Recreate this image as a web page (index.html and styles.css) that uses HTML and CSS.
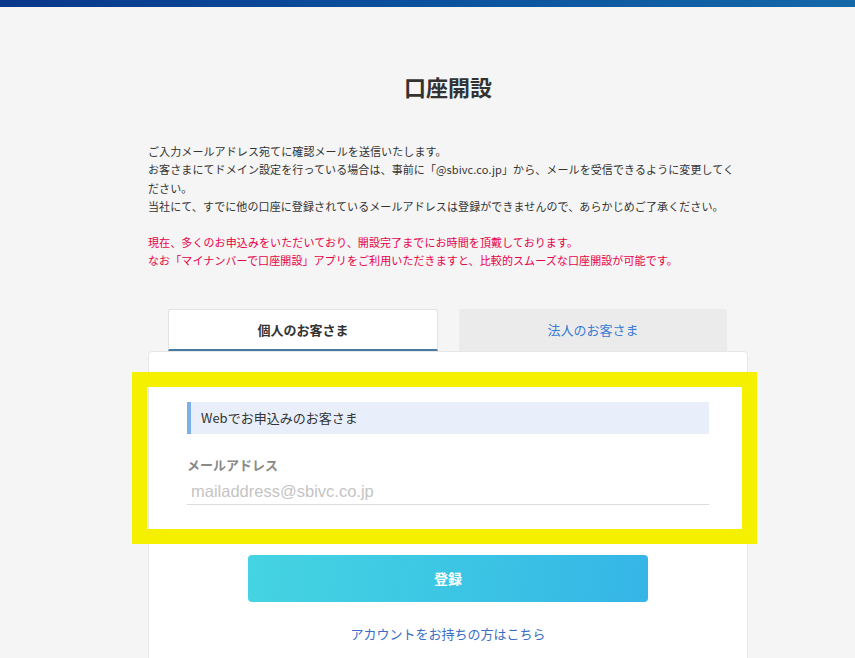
FILE: index.html
```html
<!DOCTYPE html>
<html>
	<head>
		<meta charset="UTF-8">
		<title>口座開設</title>
		<link rel="stylesheet" href="styles.css">
	</head>
	<body>
		<div class="topbar"></div>
		<div class="main">
			<h1 class="title">口座開設</h1>
			<div class="notice">
				<p>ご入力メールアドレス宛てに確認メールを送信いたします。<br>お客さまにてドメイン設定を行っている場合は、事前に「@sbivc.co.jp」から、メールを受信できるように変更してください。<br>当社にて、すでに他の口座に登録されているメールアドレスは登録ができませんので、あらかじめご了承ください。</p>
				<p class="red">現在、多くのお申込みをいただいており、開設完了までにお時間を頂戴しております。<br>なお「マイナンバーで口座開設」アプリをご利用いただきますと、比較的スムーズな口座開設が可能です。</p>
			</div>
			<div class="tabs">
				<div class="tab active">個人のお客さま</div>
				<div class="tab">法人のお客さま</div>
			</div>
			<div class="card">
				<div class="sec-title">Webでお申込みのお客さま</div>
				<label class="label">メールアドレス</label>
				<div class="input">mailaddress@sbivc.co.jp</div>
				<div class="btn">登録</div>
				<a class="link" href="#">アカウントをお持ちの方はこちら</a>
				<div class="mark"></div>
			</div>
		</div>
	</body>
</html>
```

FILE: styles.css
```css
html,body{
	margin: 0;
	padding: 0;
}
body{
	background: #f5f5f5;
	font-family: "Noto Sans CJK JP", "Liberation Sans", sans-serif;
	color: #333;
	height: 658px;
	overflow: hidden;
}
.topbar{
	height: 7px;
	background: linear-gradient(90deg, #0a378a 0%, #0a4f9c 45%, #1468a8 100%);
}
.main{
	width: 600px;
	margin-left: 148px;
}
.title{
	margin: 63px 0 0;
	font-size: 22px;
	line-height: 33px;
	font-weight: bold;
	text-align: center;
	color: #333;
}
.notice{
	width: 588px;
	margin-top: 39px;
	font-size: 11px;
	line-height: 18.3px;
	letter-spacing: 0.1px;
	color: #333;
}
.notice p{
	margin: 0 0 18px;
}
.notice .red{
	color: #e6004a;
	margin: 0;
}
.tabs{
	display: flex;
	gap: 21px;
	padding: 0 21px 0 20px;
	margin-top: 40px;
	height: 41px;
	align-items: flex-end;
}
.tab{
	flex: 1;
	height: 42px;
	box-sizing: border-box;
	display: flex;
	align-items: center;
	justify-content: center;
	font-size: 13px;
	color: #3a7bd5;
	background: #ebebeb;
	border-radius: 3px 3px 0 0;
}
.tab.active{
	height: 42px;
	background: #fff;
	color: #333;
	font-weight: bold;
	border: 1px solid #e2e2e2;
	border-bottom: 2px solid #4a7aa0;
}
.card{
	position: relative;
	background: #fff;
	border: 1px solid #e6e6e6;
	border-radius: 4px;
	padding: 50px 38px 40px;
	height: 400px;
}
.sec-title{
	height: 32px;
	line-height: 32px;
	background: #e8effb;
	border-left: 4px solid #7eb0e8;
	padding-left: 10px;
	font-size: 13px;
	color: #333;
}
.label{
	display: block;
	margin-top: 21px;
	font-size: 13px;
	line-height: 19px;
	font-weight: bold;
	color: #8a8a8a;
}
.input{
	height: 26px;
	line-height: 26px;
	padding: 4px 0 0 4px;
	border-bottom: 1px solid #ddd;
	font-family: "Liberation Sans", Arial, sans-serif;
	font-size: 16.5px;
	color: #c4c4c4;
}
.btn{
	width: 400px;
	height: 47px;
	margin: 50px auto 0;
	border-radius: 4px;
	background: linear-gradient(100deg, #45d4e2 0%, #3cc6e4 50%, #35b5e6 100%);
	color: #fff;
	font-weight: bold;
	font-size: 14px;
	line-height: 47px;
	text-align: center;
}
.link{
	display: block;
	margin-top: 22px;
	text-align: center;
	font-size: 13px;
	line-height: 19px;
	color: #3a6dc4;
	text-decoration: none;
}
.mark{
	position: absolute;
	left: -17px;
	top: 20px;
	width: 595px;
	height: 142px;
	border: 15px solid #f5ef00;
}
```
